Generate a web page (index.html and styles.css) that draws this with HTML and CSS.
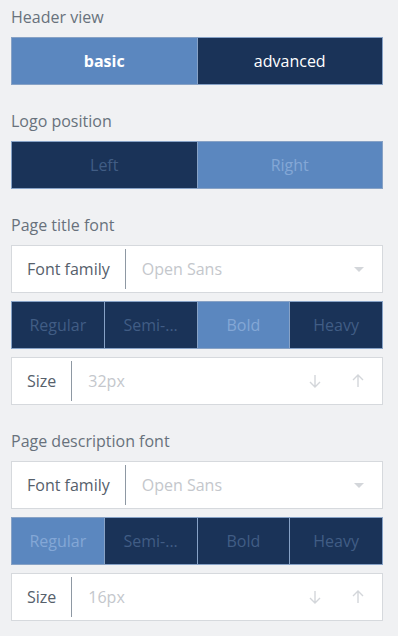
FILE: index.html
```html
<!DOCTYPE html>
<html>
    <head>
        <meta charset="utf-8" />
        <title>Header settings</title>
        <link rel="stylesheet" href="styles.css">
    </head>
    <body>
        <div class="panel">
            <div class="field">
                <div class="field_label">Header view</div>
                <div class="segments">
                    <div class="seg seg_on seg_bold">basic</div>
                    <div class="seg">advanced</div>
                </div>
            </div>

            <div class="field">
                <div class="field_label">Logo position</div>
                <div class="segments segments_off">
                    <div class="seg">Left</div>
                    <div class="seg seg_on">Right</div>
                </div>
            </div>

            <div class="field">
                <div class="field_label">Page title font</div>
                <div class="inbox">
                    <span class="inbox_name">Font family</span>
                    <span class="inbox_value">Open Sans</span>
                    <span class="caret"></span>
                </div>
                <div class="segments segments_off">
                    <div class="seg">Regular</div>
                    <div class="seg">Semi-...</div>
                    <div class="seg seg_on">Bold</div>
                    <div class="seg">Heavy</div>
                </div>
                <div class="inbox">
                    <span class="inbox_name">Size</span>
                    <span class="inbox_value">32px</span>
                    <!--上下箭头-->
                    <svg class="arrow arrow_down" width="12" height="14" viewBox="0 0 12 14"><path d="M6 1V13M1 8L6 13L11 8" fill="none" stroke="#d3d6da" stroke-width="1.4"/></svg>
                    <svg class="arrow" width="12" height="14" viewBox="0 0 12 14"><path d="M6 13V1M1 6L6 1L11 6" fill="none" stroke="#d3d6da" stroke-width="1.4"/></svg>
                </div>
            </div>

            <div class="field">
                <div class="field_label">Page description font</div>
                <div class="inbox">
                    <span class="inbox_name">Font family</span>
                    <span class="inbox_value">Open Sans</span>
                    <span class="caret"></span>
                </div>
                <div class="segments segments_off">
                    <div class="seg seg_on">Regular</div>
                    <div class="seg">Semi-...</div>
                    <div class="seg">Bold</div>
                    <div class="seg">Heavy</div>
                </div>
                <div class="inbox">
                    <span class="inbox_name">Size</span>
                    <span class="inbox_value">16px</span>
                    <svg class="arrow arrow_down" width="12" height="14" viewBox="0 0 12 14"><path d="M6 1V13M1 8L6 13L11 8" fill="none" stroke="#d3d6da" stroke-width="1.4"/></svg>
                    <svg class="arrow" width="12" height="14" viewBox="0 0 12 14"><path d="M6 13V1M1 6L6 1L11 6" fill="none" stroke="#d3d6da" stroke-width="1.4"/></svg>
                </div>
            </div>
        </div>
    </body>
</html>
```

FILE: styles.css
```css
body{
    margin:0;
    background:#f0f1f3;
    font-family:"Open Sans", "Liberation Sans", sans-serif;
    font-size:16px;
}
.panel{
    width:372px;
    padding:7px 15px 0 11px;
}
.field{
    margin-bottom:26px;
}
.field_label{
    line-height:20px;
    color:#68717c;
    margin-bottom:10px;
}
/*分段按钮*/
.segments{
    display:flex;
    height:46px;
    border:1px solid #87a2c6;
    background:#87a2c6;
    gap:1px;
    margin-bottom:8px;
}
.seg{
    flex:1;
    display:flex;
    align-items:center;
    justify-content:center;
    background:#1a3358;
    color:#ffffff;
}
.seg_on{
    background:#5b87bf;
}
.seg_bold{
    font-weight:bold;
}
.segments_off .seg{
    color:#415d85;
}
.segments_off .seg_on{
    color:#84a7d6;
}
/*输入框*/
.inbox{
    display:flex;
    align-items:center;
    height:46px;
    background:#fff;
    border:1px solid #d6d9dd;
    margin-bottom:8px;
}
.inbox_name{
    color:#56606b;
    padding:0 15px;
    align-self:stretch;
    display:flex;
    align-items:center;
    border-right:1px solid #8e98a3;
    margin:3px 0;
}
.inbox_value{
    flex:1;
    color:#c4c7cc;
    padding-left:16px;
}
.caret{
    width:0;
    height:0;
    border-left:5px solid transparent;
    border-right:5px solid transparent;
    border-top:5px solid #d3d6da;
    margin-right:18px;
}
.arrow{
    margin-right:18px;
}
.arrow_down{
    margin-right:31px;
}
```
